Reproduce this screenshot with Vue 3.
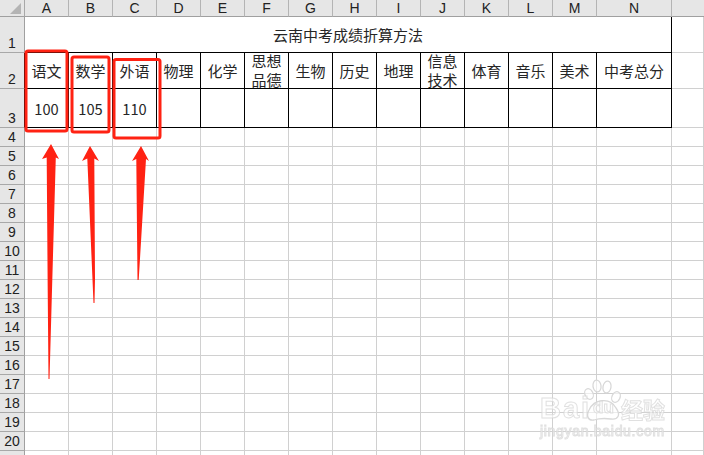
<script setup>
const cols = ['A','B','C','D','E','F','G','H','I','J','K','L','M','N']
const heads = [['语文'],['数学'],['外语'],['物理'],['化学'],['思想','品德'],['生物'],['历史'],['地理'],['信息','技术'],['体育'],['音乐'],['美术'],['中考总分']]
const values = ['100','105','110','','','','','','','','','','','']
const emptyRows = Array.from({ length: 17 }, (_, i) => i + 4)
</script>

<template>
  <div class="sheet">
    <div class="grid">
      <div class="corner">
        <svg class="tri" width="12" height="11" viewBox="0 0 12 11"><path d="M11 0V11H0Z" fill="#b4b4b4" /></svg>
      </div>
      <div v-for="c in cols" :key="c" class="colhead">{{ c }}</div>
      <div class="colhead rest"></div>

      <div class="rowhead">1</div>
      <div class="title"><span class="label">云南中考成绩折算方法</span></div>
      <div class="cell"></div>

      <div class="rowhead dark">2</div>
      <div v-for="h in heads" :key="h[0]" class="black head">
        <span v-for="line in h" :key="line" class="label">{{ line }}</span>
      </div>
      <div class="cell"></div>

      <div class="rowhead dark">3</div>
      <div v-for="(v, i) in values" :key="i" class="black">{{ v }}</div>
      <div class="cell"></div>

      <template v-for="r in emptyRows" :key="r">
        <div class="rowhead">{{ r }}</div>
        <div v-for="c in cols" :key="c" class="cell"></div>
        <div class="cell"></div>
      </template>

      <div class="rowhead"></div>
      <div v-for="c in cols" :key="c" class="cell"></div>
      <div class="cell"></div>
    </div>

    <svg class="marks" width="704" height="455" viewBox="0 0 704 455">
      <g fill="none" stroke="#ff2213" stroke-width="3">
        <rect x="26" y="51" width="41" height="80" rx="2" />
        <rect x="72" y="57" width="37" height="75" rx="2" />
        <rect x="114" y="59.5" width="46" height="78.500" rx="2" />
      </g>
      <g fill="#ff2213">
        <path d="M51 144L59 159L55.800 157.500L52 290L49.500 379H48.500L47.700 290L46.700 157.500L42 159Z" />
        <path d="M90 146L99 161L94.300 158.500L95 279L94.500 303H93.500L87.300 158.500L82 161Z" />
        <path d="M141 146L149 161L146 159L138.700 280H137.500L136.300 159L132 161Z" />
      </g>
      <g class="paw" fill="rgba(255,255,255,.6)" stroke="#d8d8d8" stroke-width="1.300">
        <ellipse cx="589" cy="394" rx="4" ry="5.500" transform="rotate(-25 589 394)" />
        <ellipse cx="597" cy="386" rx="4" ry="6" transform="rotate(-8 597 386)" />
        <ellipse cx="607" cy="387" rx="4" ry="6" transform="rotate(10 607 387)" />
        <ellipse cx="616" cy="397" rx="4" ry="5.500" transform="rotate(25 616 397)" />
        <path d="M589 410C594 399 610 397 616 408C621 415 618 420 611 419C604 418 600 418 594 420C588 421 586 416 589 410Z" />
      </g>
    </svg>

    <div class="mark">
      <div class="mark-top"><span class="bai">Bai</span><span class="du">du</span><span class="jy">经验</span></div>
      <div class="mark-url">jingyan.baidu.com</div>
    </div>
  </div>
</template>

<style>
html, body { margin: 0; background: #fff; }
</style>

<style scoped>
.sheet {
  position: relative;
  width: 704px;
  height: 455px;
  overflow: hidden;
  background: #fff;
  font-family: "Noto Sans CJK SC", "Liberation Sans", sans-serif;
  font-size: 14.67px;
  color: #262626;
}
.grid {
  display: grid;
  grid-template-columns: 25px repeat(13, 44px) 75px 32px;
  grid-template-rows: 17px 36px 36px 39px repeat(18, 19px);
}
.corner, .colhead, .rowhead {
  box-sizing: border-box;
  background: #e6e6e6;
  font-family: "Liberation Sans", sans-serif;
  font-size: 14px;
  color: #222;
}
.corner {
  position: relative;
  border-right: 1px solid #a8a8a8;
  border-bottom: 1px solid #a0a0a0;
}
.tri { position: absolute; left: 10px; top: 3px; }
.colhead {
  display: flex;
  align-items: center;
  justify-content: center;
  line-height: 16px;
  border-right: 1px solid #b4b4b4;
  border-bottom: 1px solid #a0a0a0;
}
.colhead.rest { border-right: 0; }
.rowhead {
  display: flex;
  align-items: flex-end;
  justify-content: center;
  line-height: 17px;
  border-right: 1px solid #a0a0a0;
  border-bottom: 1px solid #a8a8a8;
}
.rowhead.dark { border-right-color: #000; }
.cell {
  box-sizing: border-box;
  border-right: 1px solid #d0d0d0;
  border-bottom: 1px solid #d0d0d0;
}
.title, .black {
  box-sizing: border-box;
  display: flex;
  align-items: center;
  justify-content: center;
  text-align: center;
  border-right: 1px solid #000;
  border-bottom: 1px solid #000;
}
.title { grid-column: span 14; padding-bottom: 1px; }
.head { flex-direction: column; padding-bottom: 1px; }
.label { display: block; font-size: 15px; line-height: 19px; white-space: nowrap; }
.marks, .mark { position: absolute; left: 0; top: 0; pointer-events: none; }
.paw { filter: blur(.3px); }
.mark {
  left: 540px;
  top: 396px;
  width: 130px;
  font-family: "Liberation Sans", sans-serif;
  color: rgba(255, 255, 255, .6);
  -webkit-text-stroke: 1px rgba(214, 214, 214, .75);
  filter: blur(.3px);
}
.mark-top {
  display: flex;
  align-items: flex-end;
  height: 24px;
  line-height: 24px;
  font-weight: 700;
}
.bai { font-size: 29px; width: 53px; letter-spacing: 2px; }
.du { font-size: 17px; width: 28px; }
.jy { font-family: "Noto Sans CJK SC", sans-serif; font-size: 22px; }
.mark-url { font-size: 14px; line-height: 16px; margin-top: 3px; letter-spacing: .7px; white-space: nowrap; }
</style>
